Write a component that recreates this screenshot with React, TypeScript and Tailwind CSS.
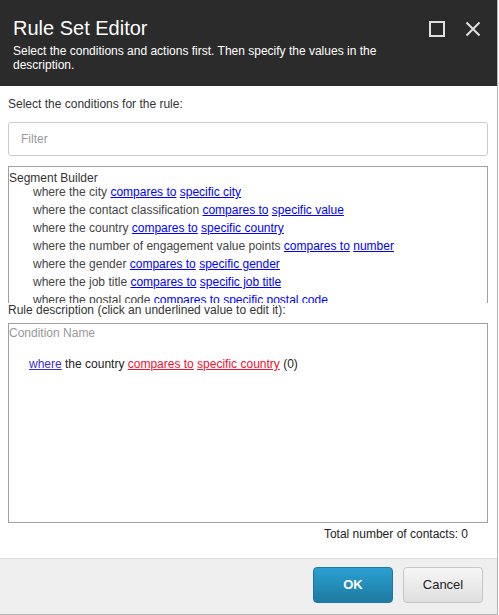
const conditions = [
  { text: "where the city", op: "compares to", value: "specific city" },
  { text: "where the contact classification", op: "compares to", value: "specific value" },
  { text: "where the country", op: "compares to", value: "specific country" },
  { text: "where the number of engagement value points", op: "compares to", value: "number" },
  { text: "where the gender", op: "compares to", value: "specific gender" },
  { text: "where the job title", op: "compares to", value: "specific job title" },
  { text: "where the postal code", op: "compares to", value: "specific postal code" },
];

function HeaderIcons() {
  return (
    <div className="mt-[5px] flex gap-[20px]">
      <svg width="16" height="16" viewBox="0 0 16 16" fill="none">
        <rect x="1" y="1" width="14" height="14" stroke="#e0e0e0" strokeWidth="2" />
      </svg>
      <svg width="16" height="16" viewBox="0 0 16 16" fill="none">
        <path d="M1.5 1.5 L14.5 14.5 M14.5 1.5 L1.5 14.5" stroke="#e0e0e0" strokeWidth="2" />
      </svg>
    </div>
  );
}

export default function App() {
  return (
    <div className="h-[615px] w-[499px] bg-white font-['Liberation_Sans',Arial,sans-serif] text-[12px] leading-[14px] text-[#333]">
      <div className="flex h-full w-[498px] flex-col border-r border-b border-[#b4b4b4]">
        <header className="flex h-[86px] shrink-0 justify-between bg-[#2b2b2b] pl-[13px] pr-[16px] pt-[16px]">
          <div>
            <h1 className="text-[20px] leading-[24px] text-white">Rule Set Editor</h1>
            <p className="mt-[4px] w-[400px] text-white">
              Select the conditions and actions first. Then specify the values in the description.
            </p>
          </div>
          <HeaderIcons />
        </header>

        <main className="flex flex-1 flex-col pl-[8px] pr-[9px]">
          <div className="mt-[11px]">Select the conditions for the rule:</div>
          <input
            className="mt-[11px] h-[34px] w-full rounded-[3px] border border-[#ccc] px-[12px] text-[12px] outline-none placeholder:text-[#999]"
            placeholder="Filter"
          />

          <div className="mt-[10px] h-[137px] shrink-0 overflow-hidden border-x border-t border-[#a0a0a0] pt-[4px]">
            <div>Segment Builder</div>
            {conditions.map((c) => (
              <div key={c.text} className="mb-[4px] pl-[24px] text-[#444]">
                {c.text}{" "}
                <a className="cursor-pointer text-[#0000ff] underline">{c.op}</a>{" "}
                <a className="cursor-pointer text-[#0000ff] underline">{c.value}</a>
              </div>
            ))}
          </div>

          <div>Rule description (click an underlined value to edit it):</div>
          <div className="mt-[6px] h-[200px] shrink-0 border border-[#a0a0a0] pt-[2px]">
            <div className="text-[#999]">Condition Name</div>
            <div className="mt-[17px] pl-[20px] text-[#222]">
              <a className="cursor-pointer text-[#3b2bdf] underline">where</a> the country{" "}
              <a className="cursor-pointer text-[#f01030] underline">compares to</a>{" "}
              <a className="cursor-pointer text-[#f01030] underline">specific country</a> (0)
            </div>
          </div>

          <div className="mt-[4px] pr-[20px] text-right text-[#222]">Total number of contacts: 0</div>
        </main>

        <footer className="flex h-[56px] shrink-0 justify-end gap-[10px] border-t border-[#dcdcdc] bg-[#efefef] pr-[14px] pt-[8px]">
          <button className="h-[36px] w-[80px] rounded-[4px] border border-[#1f77a0] bg-gradient-to-b from-[#2ba0d2] to-[#1e7aa2] text-[13px] font-bold text-white">
            OK
          </button>
          <button className="h-[36px] w-[80px] rounded-[4px] border border-[#c6c6c6] bg-gradient-to-b from-[#f6f6f6] to-[#dfdfdf] text-[13px] text-[#222]">
            Cancel
          </button>
        </footer>
      </div>
    </div>
  );
}
